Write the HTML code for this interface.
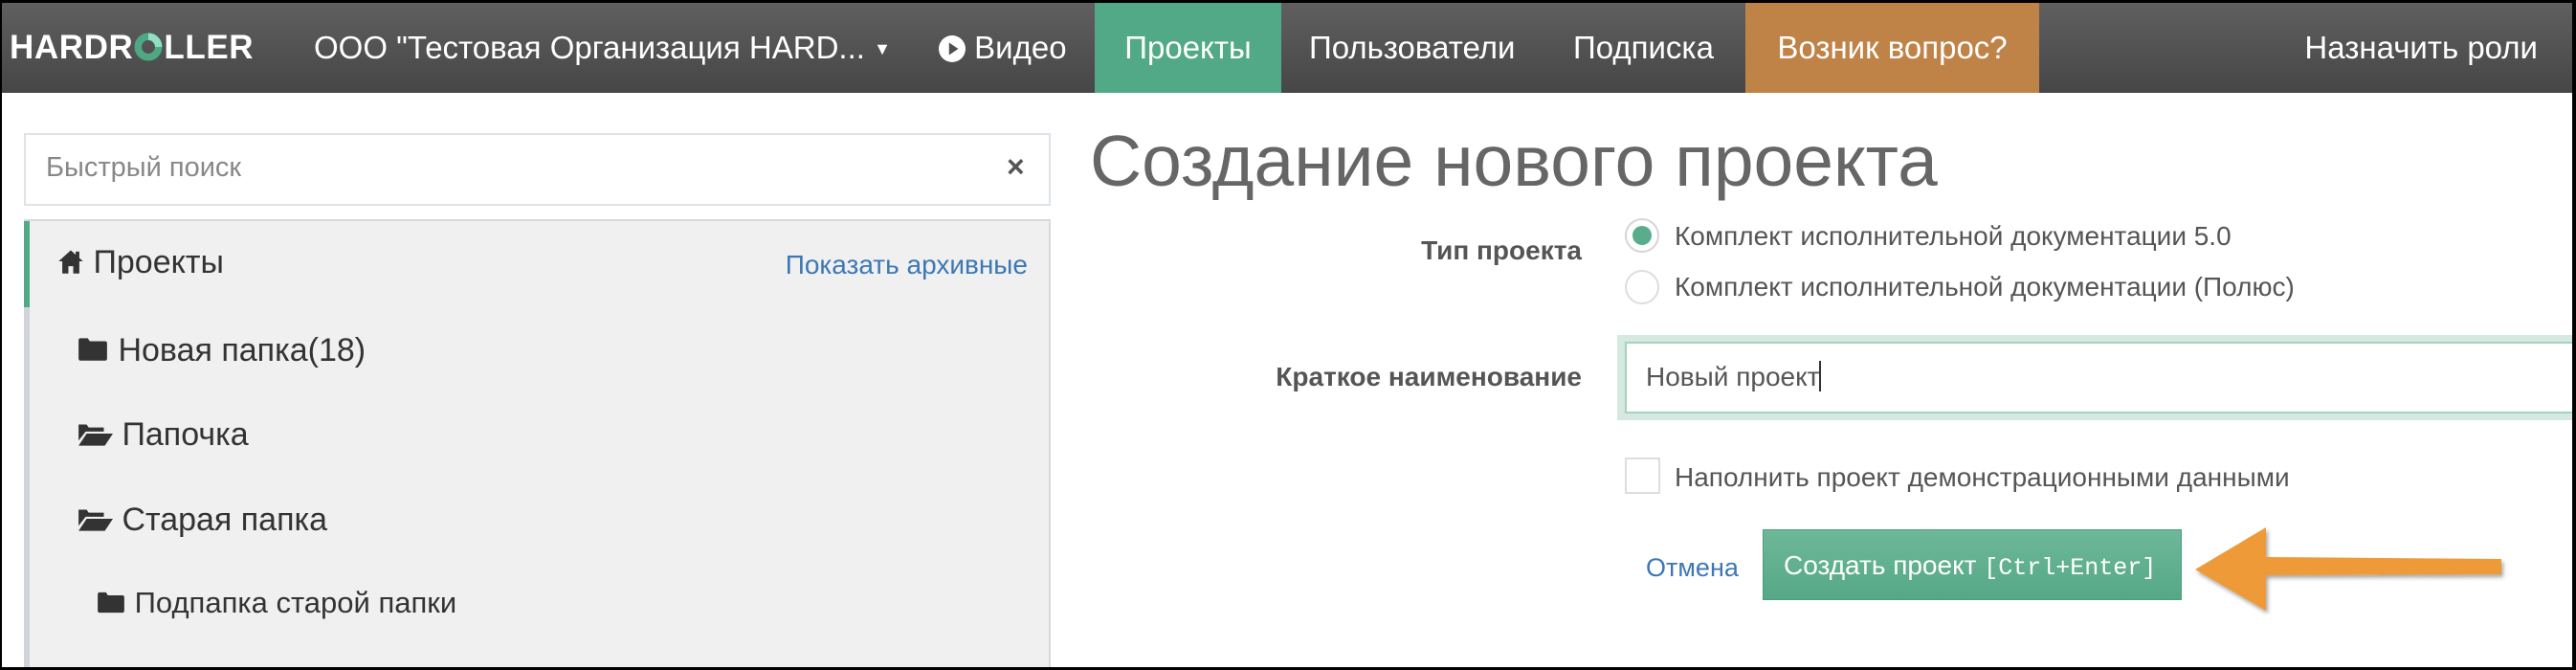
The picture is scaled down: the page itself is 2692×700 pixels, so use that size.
<!DOCTYPE html>
<html><head><meta charset="utf-8"><style>
*{margin:0;padding:0;box-sizing:border-box}
body{width:2692px;height:700px;overflow:hidden;background:#000;font-family:"Liberation Sans",Arial,sans-serif;position:relative}
.page{position:absolute;left:2px;top:3px;width:2686px;height:694px;background:#fff;overflow:hidden}
.nav{position:absolute;left:0;top:0;width:100%;height:94px;background:linear-gradient(#5f5f5f,#464646)}
.nav .t{position:absolute;top:0;height:94px;line-height:94px;color:#fff;font-size:33px;white-space:nowrap}
.abs{position:absolute;white-space:nowrap}
</style></head><body>
<div class="page">
<div class="nav">
 <div class="t" style="left:8px;font-weight:bold;font-size:35px;letter-spacing:0.6px">HARDR<svg width="30" height="30" viewBox="0 0 28 28" style="vertical-align:-3px;margin:0 1px"><circle cx="14" cy="14" r="10" fill="none" stroke="#4fa884" stroke-width="7" stroke-dasharray="48 15"/><path d="M14 4 A10 10 0 0 1 24 14" fill="none" stroke="#8fe0c0" stroke-width="7"/></svg>LLER</div>
 <div class="t" style="left:326px">ООО "Тестовая Организация HARD... <span style="font-size:18px;vertical-align:4px">▼</span></div>
 <div class="t" style="left:979px"><svg width="28" height="28" viewBox="0 0 26 26" style="vertical-align:-4px"><circle cx="13" cy="13" r="13" fill="#fff"/><path d="M10 7 L19 13 L10 19Z" fill="#4e4e4e"/></svg> Видео</div>
 <div style="position:absolute;left:1142px;top:0;width:195px;height:94px;background:#52a987"></div>
 <div class="t" style="left:1142px;width:195px;text-align:center">Проекты</div>
 <div class="t" style="left:1366px">Пользователи</div>
 <div class="t" style="left:1642px">Подписка</div>
 <div style="position:absolute;left:1822px;top:0;width:307px;height:94px;background:#bf8347"></div>
 <div class="t" style="left:1822px;width:307px;text-align:center">Возник вопрос?</div>
 <div class="t" style="right:36px">Назначить роли</div>
</div>

<div style="position:absolute;left:23px;top:136px;width:1073px;height:76px;border:2px solid #dfe3e7;background:#fff"></div>
<div class="abs" style="left:46px;top:156px;font-size:29px;color:#888">Быстрый поиск</div>
<div class="abs" style="left:1050px;top:153px;font-size:32px;color:#555;font-weight:bold">×</div>

<div style="position:absolute;left:23px;top:226px;width:1073px;height:480px;background:#f0f0f0;border:2px solid #d6dadf;border-bottom:none"></div>
<div style="position:absolute;left:23px;top:228px;width:6px;height:90px;background:#52a987"></div>
<div style="position:absolute;left:23px;top:318px;width:6px;height:400px;background:#d0d5db"></div>
<div class="abs" style="left:58px;top:252px;font-size:34px;color:#333"><svg width="28" height="28" viewBox="0 0 22 22" style="vertical-align:-2px"><path d="M11 2 L21 11 L18 11 L18 21 L13 21 L13 15 L9 15 L9 21 L4 21 L4 11 L1 11Z" fill="#333"/><rect x="15" y="3" width="3" height="6" fill="#333"/></svg> Проекты</div>
<div class="abs" style="right:1614px;top:258px;font-size:28px;color:#3c78b5">Показать архивные</div>

<div class="abs" style="left:78px;top:344px;font-size:34px;color:#333"><svg width="34" height="30" viewBox="0 0 32 26" style="vertical-align:-3px"><path d="M2 4 Q2 2 4 2 L11 2 L13 5 L28 5 Q30 5 30 7 L30 22 Q30 24 28 24 L4 24 Q2 24 2 22Z" fill="#333"/></svg> Новая папка(18)</div>
<div class="abs" style="left:78px;top:432px;font-size:34px;color:#333"><svg width="38" height="30" viewBox="0 0 36 26" style="vertical-align:-3px"><path d="M2 4 L10 4 L12 7 L27 7 L27 11 L9 11 L2 20Z" fill="#333"/><path d="M10 13 L36 13 L28 25 L2 25Z" fill="#333"/></svg> Папочка</div>
<div class="abs" style="left:78px;top:521px;font-size:34px;color:#333"><svg width="38" height="30" viewBox="0 0 36 26" style="vertical-align:-3px"><path d="M2 4 L10 4 L12 7 L27 7 L27 11 L9 11 L2 20Z" fill="#333"/><path d="M10 13 L36 13 L28 25 L2 25Z" fill="#333"/></svg> Старая папка</div>
<div class="abs" style="left:98px;top:609px;font-size:31px;color:#333"><svg width="32" height="27" viewBox="0 0 30 24" style="vertical-align:-3px"><path d="M2 4 Q2 2 4 2 L10 2 L12 5 L26 5 Q28 5 28 7 L28 20 Q28 22 26 22 L4 22 Q2 22 2 20Z" fill="#333"/></svg> Подпапка старой папки</div>

<div class="abs" style="left:1137px;top:122px;font-size:75px;color:#666">Создание нового проекта</div>

<div class="abs" style="right:1035px;top:243px;font-size:28px;color:#555;font-weight:bold">Тип проекта</div>
<div style="position:absolute;left:1696px;top:225px;width:36px;height:36px;border-radius:50%;border:2px solid #d5d5d5;background:#fff"></div>
<div style="position:absolute;left:1704px;top:233px;width:20px;height:20px;border-radius:50%;background:#5aad8c"></div>
<div class="abs" style="left:1748px;top:228px;font-size:28px;color:#555">Комплект исполнительной документации 5.0</div>
<div style="position:absolute;left:1696px;top:279px;width:36px;height:36px;border-radius:50%;border:2px solid #ddd;background:#fff"></div>
<div class="abs" style="left:1748px;top:281px;font-size:28px;color:#555">Комплект исполнительной документации (Полюс)</div>

<div class="abs" style="right:1035px;top:375px;font-size:28px;color:#555;font-weight:bold">Краткое наименование</div>
<div style="position:absolute;left:1688px;top:347px;width:1010px;height:89px;background:#d5e9e1"></div>
<div style="position:absolute;left:1696px;top:354px;width:1002px;height:75px;border:2px solid #a3d4c1;background:#fff"></div>
<div class="abs" style="left:1718px;top:374px;font-size:28px;color:#555">Новый проект<span style="display:inline-block;width:2px;height:32px;background:#333;vertical-align:-6px"></span></div>

<div style="position:absolute;left:1696px;top:475px;width:37px;height:38px;border:2px solid #ddd;background:#fff"></div>
<div class="abs" style="left:1748px;top:480px;font-size:28px;color:#555">Наполнить проект демонстрационными данными</div>

<div class="abs" style="left:1718px;top:575px;font-size:27px;color:#3c78b5">Отмена</div>
<div style="position:absolute;left:1840px;top:550px;width:438px;height:74px;background:linear-gradient(#6db899,#55a886);border:1px solid #4e9c7c"></div>
<div class="abs" style="left:1862px;top:572px;font-size:28px;color:#fff">Создать проект <span style="font-family:'Liberation Mono',monospace;font-size:25px">[Ctrl+Enter]</span></div>

<svg style="position:absolute;left:2280px;top:540px" width="340" height="100" viewBox="0 0 340 100">
<defs><filter id="s"><feDropShadow dx="2" dy="3" stdDeviation="2" flood-color="#000" flood-opacity="0.35"/></filter></defs>
<path d="M12 52 L86 8 L86 39 L332 41 L332 57 L86 58 L86 95Z" fill="#ef9a38" filter="url(#s)"/>
</svg>
</div>
</body></html>
